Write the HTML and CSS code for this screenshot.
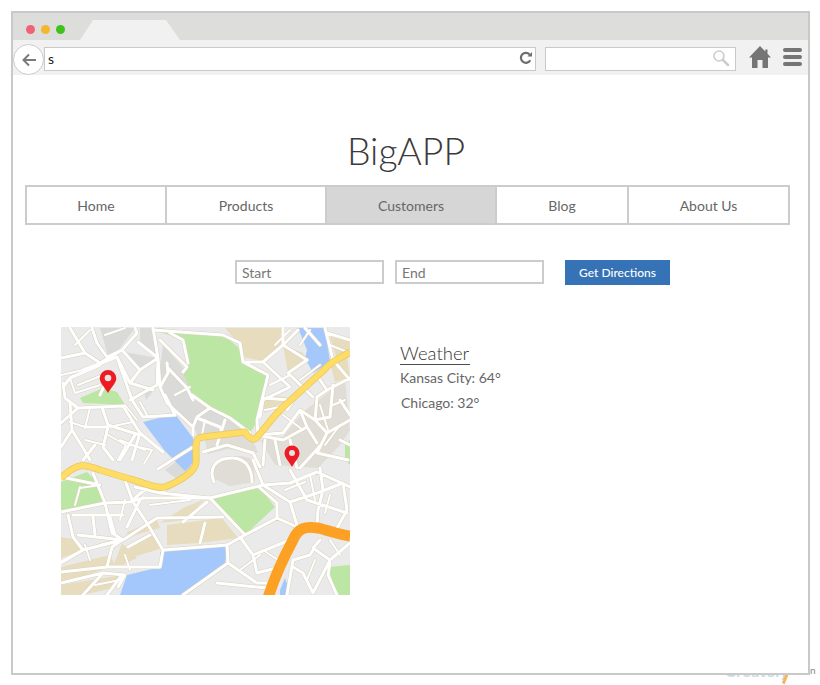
FILE: index.html
```html
<!DOCTYPE html>
<html lang="en">
<head>
<meta charset="utf-8">
<title>BigAPP</title>
<link rel="stylesheet" href="styles.css">
</head>
<body>
<div class="watermark"><span class="wm-text">Creately</span><span class="wm-slash"></span><span class="wm-n">n</span></div>
<div class="window">
  <div class="tabbar">
    <div class="dots"><span class="dot red"></span><span class="dot amber"></span><span class="dot green"></span></div>
    <div class="tab"></div>
  </div>
  <div class="toolbar">
    <div class="back">
      <svg width="16" height="14" viewBox="0 0 16 14"><path d="M15 7H2.500M8 1.500 2.500 7 8 12.500" fill="none" stroke="#7a7a7a" stroke-width="2"/></svg>
    </div>
    <div class="address">
      <span>s</span>
      <svg width="14" height="14" viewBox="0 0 14 14"><path d="M11.300 9.200A5 5 0 1 1 10.600 3.400" fill="none" stroke="#6e6e6e" stroke-width="2.200"/><path d="M8.400 5.600H13V1z" fill="#6e6e6e"/></svg>
    </div>
    <div class="search">
      <svg width="18" height="18" viewBox="0 0 18 18"><circle cx="7" cy="7" r="5" fill="none" stroke="#ccc" stroke-width="1.600"/><path d="M10.800 10.800 16 16" stroke="#ccc" stroke-width="2.600" stroke-linecap="round"/></svg>
    </div>
    <svg class="home" width="22" height="22" viewBox="0 0 22 22"><path d="M11 0 0 11.500h3v10.500h5.500v-8h5v8H19V11.500h3L18.500 7.800V3.500h-2.200v2z" fill="#757575"/></svg>
    <div class="burger"><span></span><span></span><span></span></div>
  </div>
  <main class="page">
    <h1 class="title">BigAPP</h1>
    <nav class="nav">
      <a class="nav-item">Home</a>
      <a class="nav-item">Products</a>
      <a class="nav-item active">Customers</a>
      <a class="nav-item">Blog</a>
      <a class="nav-item">About Us</a>
    </nav>
    <form class="directions">
      <input class="field" type="text" value="Start">
      <input class="field" type="text" value="End">
      <button class="go" type="button">Get Directions</button>
    </form>
    <section class="content">
      <svg class="map" width="289" height="268" viewBox="61 327 289 268">
        <defs>
          <g id="roads">
            <path d="M61 358 85 353 70 328M85 353l15 10 22-13 15-17-2-5M92 328l5 15 10 14 15-7M122 350l18 20 18-12-20-16M153 328l5 30 2 29 7 16 26 24v8M83 370l34-13 15 43 11 17 32-2M63 387l7-9 30-13M63 383l2 15 13 10-17 15M78 408l45-2 17 27 23 19M102 407l6 18 32 10M85 427h23l-5 20 10 13M70 403l2 27 11 18 7 12M61 447l11-17M130 400l27-15 1-25M117 357l13 26 10-13M130 383l23 7M167 363l1 10-8 14M168 368l19 20 6 12M192 395l18 13-13 9-4 10M197 418l23 9 3 8M210 408l20 10 20 15"/>
            <path d="M153 330l70 5 17 8 3 19 25 13-11 45 1 15M160 340l27 27-4 5M170 333l13 7 5 23M243 362h20l20-17 15-15M263 362l27 25-27 13-3 17M283 345l24 15-19 13 25 24M263 398l27 2M325 328l8 32 17 20M350 340l-23-7M318 377l9 13-10 7-2 23-15-10-17 23-26 2M327 390l23-12M333 385l-3 32-15 3M315 420l12 13 23-13M327 433l-10 20 31 7M300 410l7 17 10 16M257 435l26 5 24-13"/>
            <path d="M203 452l24-7 26 8 7 14M214 482c-6-14 2-24 18-24s20 14 20 24M193 447l-35 22M142 498h68l53-13 27 17 7 23M263 485l-10-25M317 472l-27 11-27 2M290 470l17 30 40 13M317 472l33 15M320 468l3 22-5 20-1 15M290 502l30-10 23-9M343 483l4 27-10 18M210 498l35 37 32-17M260 488l17 15v15l20 9M245 535l-18 10 1 18-45 32M240 537l13 18 37-15M253 555l4 18 23-6M228 563l29 20h13M217 583l50 5M320 540l-7 8 17 12 20-17M293 560l17-5 3-5M293 560l-6 35M330 560l-17 33-10-20-10-6M330 563l-2 12 9 20"/>
            <path d="M61 512l44-9 25-1 13-4M93 473l12 30 7 30 11 7M125 480l8 22 14 21 16 27M68 515l5 22 10 13-22 12M73 515h50M78 535l45 5 34-22 66-1M61 563l22-13 40-10M93 517l2 18M110 517l5 18M107 567l5-20 10-7M128 547l22-12M61 572l46-5h53l3-17 64-5M61 583l42-10 22 2-7 12M103 573l-20 22M205 523l-5 20M183 522l24-20M140 500l-13 27M183 478l-23 15-25-6M150 485l-15 13M100 485l-39-8M122 575l-15 20M160 493l50 5"/>
            <path d="M290 440l7 28M300 468l20-22M265 440l-2 25M275 440l5 25M340 400l10 15M340 440l10 5M320 345l-15-17M283 345v-17M297 395l-10 15M225 420l-8 25M175 415l-10-20M100 395l10-22M140 433l-8 27M120 460l15-25M95 445l-12 15"/>
          </g>
          <g id="lanes">
            <path d="M61 375l22-5M70 378l5 15M75 393l25-8M78 385l25-10M125 405l12 15M132 400l12-8M140 402l8 15M90 408l-5 20M85 427l-15-5M108 427l25-5M85 440l20 5M108 435l18 10-8 15M130 445l22 5-8 14M120 440l25 10M105 335l20-7M75 345l15-15M175 395l15-8M205 420l-3 15"/>
            <path d="M300 345l10-15M330 345l20 8M300 380l20-15M345 400l-12 5M320 405l8 25M340 425l-15 20M283 415l20 15M265 410l25-5M275 345l15-15M270 385l20-10"/>
            <path d="M310 475l5 25M330 495l-5 18M285 490l20-8M263 550l15 10M240 570l20-15M315 560l-8 20M340 555l-10-15"/>
            <path d="M120 520l5-20M150 505l40-5M100 545l20-5M90 560l-5-15M95 585l25-5M130 570l-5-15M80 488l20-3M75 505l5-18"/>
          </g>
        </defs>
        <rect class="m-base" x="61" y="327" width="289" height="268"/>
        <path class="m-dark" d="M100 328h35l-15 20-12 8zM140 328h12l5 27-17-13zM125 352l32 6-17 10zM163 345l22 25 5 25 18 13 20 10 17 14-47 5-5-12-28-25-5-30zM142 385l12 5-8 10zM165 470l20-15 8 15-15 10z"/>
        <path class="m-warm" d="M260 440l23-3 20-25 42-32 5 50-10 15-22 23-43-3zM213 467c5-12 30-14 40-7l2 22-25 4-15-7zM205 440l45-7 8 20-30-4-20 5z"/>
        <path class="m-green" d="M157 328l66 7 15 12 4 15 26 13-10 45-8 13-20-15-20-10-18-13-9-23 5-9-5-23-20-7zM80 398l23-10 14 4 8 13-42-2zM61 482l26-10 13 13 5 18-44 9zM210 498l50-10 15 19-30 28zM328 567l22-2v30h-13zM345 445l5-5v25l-5-5z"/>
        <path class="m-beige" d="M225 328h57l1 15-16 19-24-5-5-14zM330 337l20 3v10l-13 10zM61 537l17 3 4 10-21 8zM167 525l55-7 16 20-38 5-33 2zM160 523l23-15 22-9-20 21zM127 532l30-12 3 8-32 9zM128 547l24-12 11 13-30 9zM61 567l49-12 5 10-54 20zM61 585l61-10-5 12-34 8H61zM113 567l9-24 15 15-24 12zM270 395l20 3-25 15-2-12zM283 345l20 8 3 5-18 15zM330 362l17-5 3 20-15 5z"/>
        <path class="m-blue" d="M298 328h27l5 34-17 11-8-15 2-8zM143 422l32-8 18 24 3 22-11 11-20-20zM160 552l68-7-3 18-38 32h-67l7-20 33-8zM280 590l5-12 4 12-2 5h-7z"/>
        <use href="#roads" class="r-case"/>
        <use href="#lanes" class="l-case"/>
        <use href="#roads" class="r-road"/>
        <use href="#lanes" class="l-road"/>
        <path class="h-yellow-case" d="M350 352C338 360 332 360 324 370L282 408C270 420 264 430 258 436C255 441 250 440 245 432L203 437C195 438 196 444 196 450V462C196 472 178 482 165 487C155 489 145 483 130 479L100 470C85 464 78 462 61 478"/>
        <path class="h-yellow" d="M350 352C338 360 332 360 324 370L282 408C270 420 264 430 258 436C255 441 250 440 245 432L203 437C195 438 196 444 196 450V462C196 472 178 482 165 487C155 489 145 483 130 479L100 470C85 464 78 462 61 478"/>
        <path class="h-orange" d="M268 598C275 575 285 555 293 540C298 528 305 526 318 528C330 531 340 535 350 536"/>
        <path class="pin" d="M108 370a8.300 8.300 0 0 1 8.300 8.300c0 5-5 9-8.300 14.700-3.300-5.700-8.300-9.700-8.300-14.700A8.300 8.300 0 0 1 108 370z"/>
        <circle class="pin-hole" cx="108" cy="378" r="3.300"/>
        <path class="pin" d="M292 445.500a7.500 7.500 0 0 1 7.500 7.500c0 5-4.500 8-7.500 14-3-6-7.500-9-7.500-14a7.500 7.500 0 0 1 7.500-7.500z"/>
        <circle class="pin-hole" cx="292" cy="453" r="3"/>
      </svg>
      <aside class="weather">
        <h2 class="weather-title">Weather</h2>
        <p class="city">Kansas City: 64°</p>
        <p class="city second">Chicago: 32°</p>
      </aside>
    </section>
  </main>
</div>
</body>
</html>
```

FILE: styles.css
```css
* { box-sizing: border-box; }
html, body { margin: 0; padding: 0; background: #fff; }
body { position: relative; width: 820px; height: 685px; overflow: hidden; padding: 11px 0 0 11px; font-family: Lato, "Liberation Sans", sans-serif; color: #555; }

.window { position: relative; width: 799px; height: 664px; border: 2px solid #c9cac8; background: #fff; display: flex; flex-direction: column; }

.tabbar { height: 27px; background: #dddedc; display: flex; flex: none; }
.dots { display: flex; gap: 6px; padding: 12px 0 0 13px; width: 67px; }
.dot { width: 9px; height: 9px; border-radius: 50%; }
.red { background: #ee6476; }
.amber { background: #f1b72f; }
.green { background: #3ec31c; }
.tab { width: 100px; height: 20px; margin-top: 7px; background: #f1f1f1; clip-path: polygon(0 100%, 13px 0, 86px 0, 100% 100%); }

.toolbar { position: relative; height: 35px; background: #f1f1f1; flex: none; display: flex; align-items: flex-start; padding: 7px 0 0 31px; }
.back { position: absolute; left: 0; top: 4px; width: 31px; height: 31px; border-radius: 50%; border: 1px solid #ccc; background: #fff; display: flex; align-items: center; justify-content: center; z-index: 1; }
.address { width: 492px; height: 24px; background: #fff; border: 1px solid #c9c9c9; display: flex; align-items: center; justify-content: space-between; padding: 0 2px 2px 3px; font-size: 14px; color: #222; }
.search { width: 191px; height: 24px; margin-left: 9px; background: #fff; border: 1px solid #c9c9c9; display: flex; align-items: center; justify-content: flex-end; padding: 0 5px 3px 0; }
.home { margin: -1px 0 0 13px; }
.burger { width: 19px; margin: 1px 0 0 12px; display: flex; flex-direction: column; gap: 3px; }
.burger span { height: 4px; border-radius: 2px; background: #757575; }

.page { flex: 1; display: flex; flex-direction: column; padding: 0 0 0 12px; }
.title { margin: 54px 0 0; height: 56px; text-align: center; font-size: 37.400px; line-height: 44px; font-weight: 300; color: #3a3a3a; width: 762px; }

.nav { display: grid; grid-template-columns: 138px 158px 168px 130px 1fr; gap: 2px; width: 765px; height: 40px; background: #ccc; border: 2px solid #ccc; }
.nav-item { background: #fff; display: flex; align-items: center; justify-content: center; font-size: 14px; color: #666; }
.nav-item.active { background: #d6d6d6; }

.directions { display: flex; align-items: flex-start; margin: 35px 0 0 210px; }
.field { width: 149px; height: 24px; border: 2px solid #ccc; background: #fff; padding: 1px 5px 0; margin: 0 11px 0 0; font: 14px Lato, "Liberation Sans", sans-serif; color: #777; outline: none; }
.go { width: 105px; height: 25px; margin-left: 10px; border: 0; padding: 0; background: #3572b6; color: #fff; font: 500 12px Lato, "Liberation Sans", sans-serif; }

.content { display: flex; align-items: flex-start; margin: 42px 0 0 36px; }
.map { display: block; flex: none; }
.weather { margin: 16px 0 0 50px; }
.weather-title { margin: 0; width: 70px; font-size: 18.500px; line-height: 21px; font-weight: 300; color: #333; border-bottom: 1px solid #4d4d4d; }
.city { margin: 4px 0 0; font-size: 14px; line-height: 17px; color: #666; }
.city.second { margin: 8px 0 0 1px; }

.m-base { fill: #eaeaea; }
.m-dark { fill: #dadad9; }
.m-warm { fill: #e0dcd6; }
.m-green { fill: #bce6a3; }
.m-beige { fill: #e7dcbd; }
.m-blue { fill: #a4c8fc; }
.r-case, .r-road, .l-case, .l-road { fill: none; stroke-linejoin: round; stroke-linecap: round; }
.r-case { stroke: #d8d2bb; stroke-width: 4; }
.r-road { stroke: #fff; stroke-width: 3; }
.l-case { stroke: #d8d2bb; stroke-width: 3; }
.l-road { stroke: #fff; stroke-width: 2; }
.h-yellow, .h-yellow-case, .h-orange { fill: none; stroke-linejoin: round; }
.h-yellow-case { stroke: #e6c766; stroke-width: 7; }
.h-yellow { stroke: #ffdc64; stroke-width: 5.500; }
.h-orange { stroke: #fda124; stroke-width: 11; }
.pin { fill: #ed1c24; }
.pin-hole { fill: #e8e3e0; }

.watermark { position: absolute; left: 0; top: 0; width: 820px; height: 685px; }
.wm-text { position: absolute; left: 725px; top: 661px; font-size: 16px; line-height: 20px; font-weight: 700; letter-spacing: 0.500px; color: #c9dae8; }
.wm-slash { position: absolute; left: 784px; top: 672px; width: 3px; height: 12px; background: #f7b45c; transform: rotate(22deg); }
.wm-n { position: absolute; left: 810px; top: 664px; font-size: 10px; line-height: 12px; color: #888; }
```
